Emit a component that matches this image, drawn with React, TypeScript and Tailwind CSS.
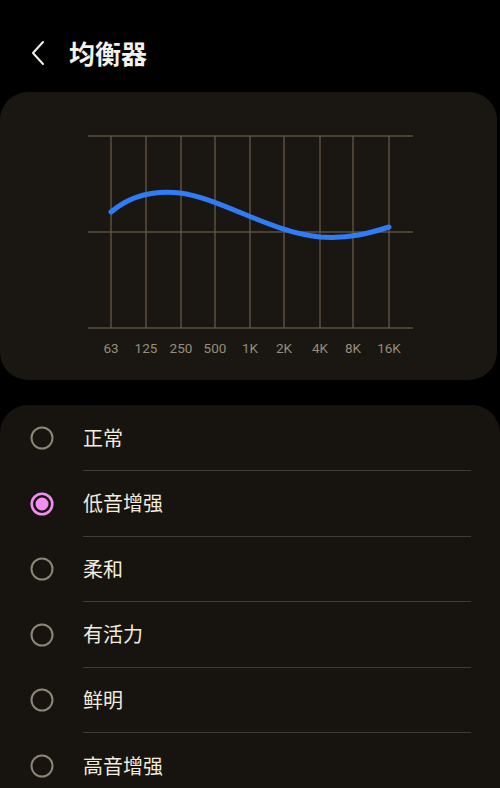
import React from "react";

const bands = ["63", "125", "250", "500", "1K", "2K", "4K", "8K", "16K"];
const xs = [111, 146, 181, 215, 250, 284, 320, 353, 389];
const presets = ["正常", "低音增强", "柔和", "有活力", "鲜明", "高音增强"];

function Radio({ checked }: { checked: boolean }) {
  return (
    <svg width="26" height="26" viewBox="0 0 26 26">
      {checked ? (
        <>
          <circle cx="13" cy="13" r="10.3" fill="none" stroke="#f28ef0" strokeWidth="2.6" />
          <circle cx="13" cy="13" r="6.5" fill="#f28ef0" />
        </>
      ) : (
        <circle cx="13" cy="13" r="10.5" fill="none" stroke="#8d8676" strokeWidth="2" />
      )}
    </svg>
  );
}

export default function App() {
  return (
    <div
      className="w-[500px] h-[788px] bg-black overflow-hidden flex flex-col"
      style={{ fontFamily: '"Noto Sans CJK SC", "Noto Sans", sans-serif' }}
    >
      <header className="h-[92px] shrink-0 flex items-center pl-[30px] pt-[14px]">
        <svg width="16" height="26" viewBox="0 0 16 26" className="mr-[23px]">
          <path d="M13 2 L3 13 L13 24" fill="none" stroke="#f2f0ea" strokeWidth="2" strokeLinecap="round" strokeLinejoin="round" />
        </svg>
        <h1 className="text-[26px] font-bold text-[#f4f1ea] leading-none">均衡器</h1>
      </header>

      <section className="mr-[3px] h-[288px] shrink-0 rounded-[28px] bg-[#1a1713]">
        <svg width="497" height="288" viewBox="0 0 497 288">
          {[44, 140, 236].map((y) => (
            <line key={y} x1="88" x2="413" y1={y} y2={y} stroke="#5b513f" strokeWidth="1.5" />
          ))}
          {xs.map((x) => (
            <line key={x} x1={x} x2={x} y1="44" y2="236" stroke="#5b513f" strokeWidth="1.5" />
          ))}
          <path
            d="M111,120 C130,104 152,98 180,101 C220,106 270,140 320,145 C350,147 370,141 389,135"
            fill="none"
            stroke="#2f7cf6"
            strokeWidth="5"
            strokeLinecap="round"
          />
          {bands.map((b, i) => (
            <text
              key={b}
              x={xs[i]}
              y="261"
              textAnchor="middle"
              fontSize="13.5"
              fill="#978c78"
              fontFamily='"Roboto", "Noto Sans", sans-serif'
            >
              {b}
            </text>
          ))}
        </svg>
      </section>

      <section className="mt-[25px] flex-1 rounded-t-[28px] bg-[#171410] pt-[0.5px]">
        {presets.map((p, i) => (
          <div key={p} className="h-[65.5px] flex items-center">
            <div className="w-[83px] flex justify-center">
              <Radio checked={i === 1} />
            </div>
            <div
              className={`flex-1 mr-[29px] h-full flex items-center text-[20px] text-[#f2ecdf] ${
                i < presets.length - 1 ? "border-b border-[#3f3b35]" : ""
              }`}
            >
              {p}
            </div>
          </div>
        ))}
      </section>
    </div>
  );
}
